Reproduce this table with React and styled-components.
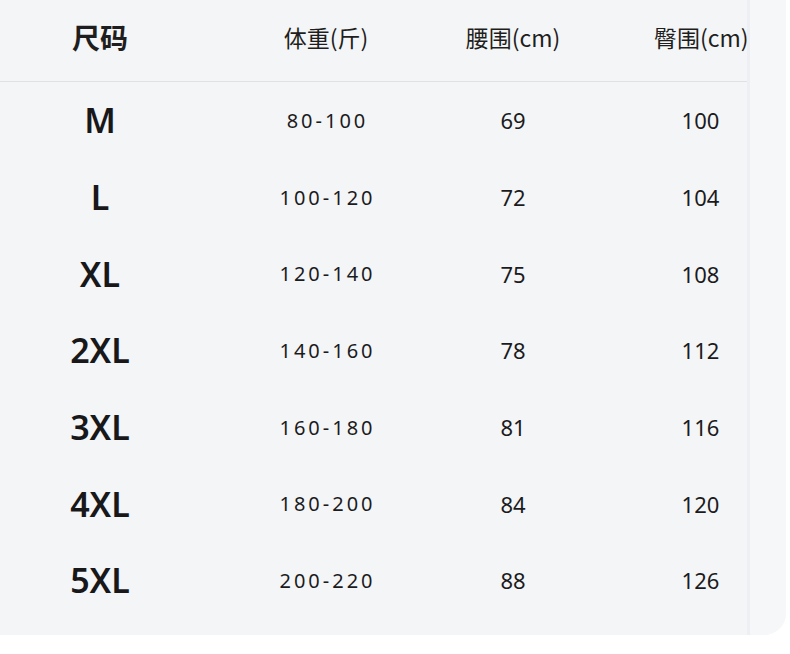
import React from 'react';
import styled, { createGlobalStyle } from 'styled-components';

const GlobalStyle = createGlobalStyle`
	body {
		margin: 0;
		background: #ffffff;
		font-family: "Noto Sans", "Noto Sans CJK SC", sans-serif;
		color: #1b1b1d;
	}
`;

const rows = [
	['M', '80-100', '69', '100'],
	['L', '100-120', '72', '104'],
	['XL', '120-140', '75', '108'],
	['2XL', '140-160', '78', '112'],
	['3XL', '160-180', '81', '116'],
	['4XL', '180-200', '84', '120'],
	['5XL', '200-220', '88', '126'],
];

const App = () => {
	return (
		<>
			<GlobalStyle />
			<Card>
				<Table>
					<HeaderRow>
						<HeadCell $bold>尺码</HeadCell>
						<HeadCell>体重(斤)</HeadCell>
						<HeadCell>腰围(cm)</HeadCell>
						<HeadCell $pad={80}>臀围(cm)</HeadCell>
					</HeaderRow>
					{rows.map(([size, weight, waist, hip]) => (
						<Row key={size}>
							<SizeCell>{size}</SizeCell>
							<WeightCell>{weight}</WeightCell>
							<NumCell>{waist}</NumCell>
							<NumCell $pad={80}>{hip}</NumCell>
						</Row>
					))}
				</Table>
				<Edge />
			</Card>
		</>
	);
};

const Card = styled.main`
	display: flex;
	width: 786px;
	height: 635px;
	background: #f4f5f7;
	border-bottom-right-radius: 22px;
	overflow: hidden;
`;

const Table = styled.div`
	width: 747px;
	display: flex;
	flex-direction: column;
`;

const Columns = styled.div`
	display: grid;
	grid-template-columns: 200px 252px 122px 173px;
	align-items: center;
`;

const HeaderRow = styled(Columns)`
	height: 82px;
	border-bottom: 1px solid #e0e1e4;
	box-sizing: border-box;
	padding-bottom: 7px;
`;

const Row = styled(Columns)`
	height: 76.7px;
`;

const Cell = styled.div`
	text-align: center;
	padding-left: ${(p) => p.$pad || 0}px;
	white-space: nowrap;
`;

const HeadCell = styled(Cell)`
	font-family: "Noto Sans CJK SC", sans-serif;
	font-size: ${(p) => (p.$bold ? 28 : 23)}px;
	font-weight: ${(p) => (p.$bold ? 700 : 400)};
	color: #1e1e20;
`;

const SizeCell = styled(Cell)`
	font-size: 34px;
	font-weight: 600;
	color: #18181a;
`;

const WeightCell = styled(Cell)`
	font-size: 20px;
	letter-spacing: 3px;
	padding-left: 3px;
`;

const NumCell = styled(Cell)`
	font-size: 22px;
`;

const Edge = styled.div`
	flex: 1;
	background: #f6f7f9;
	border-left: 3px solid #eeeff2;
`;

export default App;
